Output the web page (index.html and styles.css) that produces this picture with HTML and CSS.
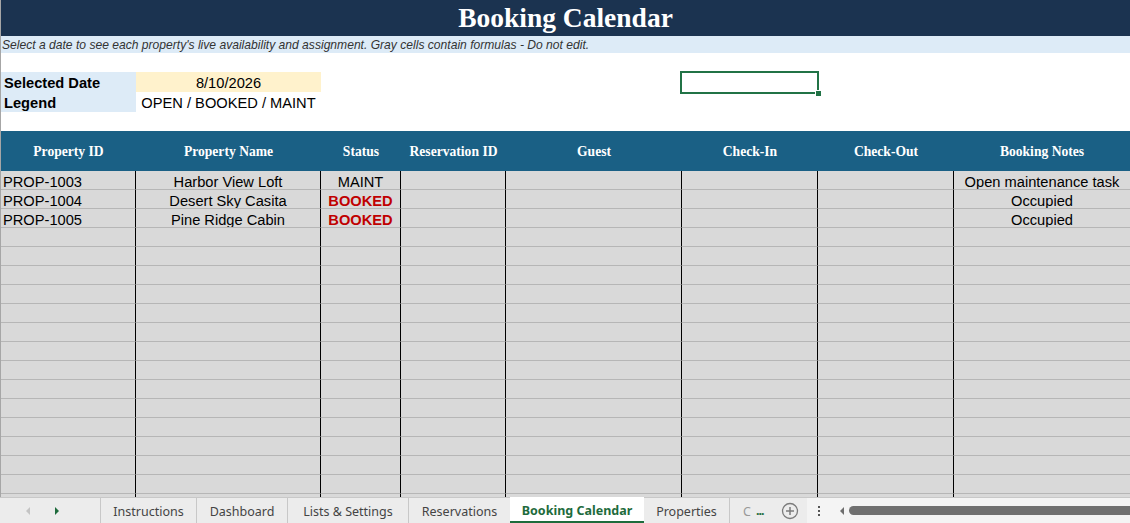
FILE: index.html
```html
<!DOCTYPE html>
<html lang="en">
<head>
  <meta charset="UTF-8" />
  <title>Booking Calendar</title>
  <link rel="stylesheet" href="styles.css">
</head>
<body>
  <div class="sheet">
    <div class="title-bar">Booking Calendar</div>
    <div class="subtitle">Select a date to see each property's live availability and assignment. Gray cells contain formulas - Do not edit.</div>

    <div class="info">
      <div class="info-row">
        <div class="info-label">Selected Date</div>
        <div class="info-value date">8/10/2026</div>
      </div>
      <div class="info-row">
        <div class="info-label">Legend</div>
        <div class="info-value">OPEN / BOOKED / MAINT</div>
      </div>
    </div>

    <!-- active cell cursor -->
    <div class="cell-cursor"><span class="fill-handle"></span></div>

    <div class="head row">
      <div>Property ID</div>
      <div>Property Name</div>
      <div>Status</div>
      <div>Reservation ID</div>
      <div>Guest</div>
      <div>Check-In</div>
      <div>Check-Out</div>
      <div>Booking Notes</div>
    </div>

    <div class="grid">
      <div class="row">
        <div class="left">PROP-1003</div><div>Harbor View Loft</div><div>MAINT</div><div></div><div></div><div></div><div></div><div>Open maintenance task</div>
      </div>
      <div class="row">
        <div class="left">PROP-1004</div><div>Desert Sky Casita</div><div class="booked">BOOKED</div><div></div><div></div><div></div><div></div><div>Occupied</div>
      </div>
      <div class="row">
        <div class="left">PROP-1005</div><div>Pine Ridge Cabin</div><div class="booked">BOOKED</div><div></div><div></div><div></div><div></div><div>Occupied</div>
      </div>
      <div class="row"><div></div><div></div><div></div><div></div><div></div><div></div><div></div><div></div></div>
      <div class="row"><div></div><div></div><div></div><div></div><div></div><div></div><div></div><div></div></div>
      <div class="row"><div></div><div></div><div></div><div></div><div></div><div></div><div></div><div></div></div>
      <div class="row"><div></div><div></div><div></div><div></div><div></div><div></div><div></div><div></div></div>
      <div class="row"><div></div><div></div><div></div><div></div><div></div><div></div><div></div><div></div></div>
      <div class="row"><div></div><div></div><div></div><div></div><div></div><div></div><div></div><div></div></div>
      <div class="row"><div></div><div></div><div></div><div></div><div></div><div></div><div></div><div></div></div>
      <div class="row"><div></div><div></div><div></div><div></div><div></div><div></div><div></div><div></div></div>
      <div class="row"><div></div><div></div><div></div><div></div><div></div><div></div><div></div><div></div></div>
      <div class="row"><div></div><div></div><div></div><div></div><div></div><div></div><div></div><div></div></div>
      <div class="row"><div></div><div></div><div></div><div></div><div></div><div></div><div></div><div></div></div>
      <div class="row"><div></div><div></div><div></div><div></div><div></div><div></div><div></div><div></div></div>
      <div class="row"><div></div><div></div><div></div><div></div><div></div><div></div><div></div><div></div></div>
      <div class="row"><div></div><div></div><div></div><div></div><div></div><div></div><div></div><div></div></div>
      <div class="row cut"><div></div><div></div><div></div><div></div><div></div><div></div><div></div><div></div></div>
    </div>
  </div>

  <div class="tab-bar">
    <div class="nav">
      <svg width="8" height="10" viewBox="0 0 8 10"><path d="M6 1 L2 5 L6 9 Z" fill="#c4c4c4"/></svg>
      <svg width="8" height="10" viewBox="0 0 8 10"><path d="M2 1 L6 5 L2 9 Z" fill="#1e6b3c"/></svg>
    </div>
    <div class="tab" style="width:96px">Instructions</div>
    <div class="tab" style="width:91px">Dashboard</div>
    <div class="tab" style="width:121px">Lists &amp; Settings</div>
    <div class="tab" style="width:102px">Reservations</div>
    <div class="tab active" style="width:134px">Booking Calendar</div>
    <div class="tab" style="width:85px">Properties</div>
    <div class="tab partial">C</div>
    <div class="more">...</div>
    <div class="add">
      <svg width="18" height="18" viewBox="0 0 18 18">
        <circle cx="9" cy="9" r="7.5" fill="none" stroke="#7b7b7b" stroke-width="1.3"/>
        <path d="M9 5 V13 M5 9 H13" stroke="#7b7b7b" stroke-width="1.5"/>
      </svg>
    </div>
    <div class="scroll-area">
      <div class="dots"><span></span><span></span><span></span></div>
      <svg class="arrow" width="6" height="10" viewBox="0 0 6 10"><path d="M5 1 L1 5 L5 9 Z" fill="#6e6e6e"/></svg>
      <div class="thumb"></div>
    </div>
  </div>
</body>
</html>
```

FILE: styles.css
```css
body {
  margin: 0;
  width: 1130px;
  height: 523px;
  overflow: hidden;
  background: #fff;
  font-family: 'Liberation Sans', Arial, sans-serif;
}
.sheet {
  position: relative;
  border-left: 1px solid #a6a6a6;
  width: 1129px;
  height: 497px;
}
.title-bar {
  height: 36px;
  background: #1b3350;
  color: #fff;
  font-family: 'Liberation Serif', 'Times New Roman', serif;
  font-weight: bold;
  font-size: 27.5px;
  line-height: 36px;
  text-align: center;
}
.subtitle {
  height: 15px;
  padding: 2px 0 0 1px;
  background: #ddebf7;
  color: #333;
  font-style: italic;
  font-size: 12.1px;
  line-height: 15px;
  white-space: nowrap;
}
.info {
  padding: 19px 0;
}
.info-row {
  display: flex;
  height: 20px;
  font-size: 14.67px;
  line-height: 22px;
}
.info-label {
  width: 132px;
  padding-left: 3px;
  background: #ddebf7;
  font-weight: bold;
}
.info-value {
  width: 185px;
  text-align: center;
  white-space: nowrap;
}
.info-value.date {
  background: #fff2cc;
}
.cell-cursor {
  position: absolute;
  left: 679px;
  top: 71px;
  width: 135px;
  height: 19px;
  border: 2px solid #217346;
}
.fill-handle {
  position: absolute;
  right: -4px;
  bottom: -4px;
  width: 5px;
  height: 5px;
  background: #217346;
  border: 1px solid #fff;
  border-right: none;
  border-bottom: none;
}
.row {
  display: grid;
  grid-template-columns: 135px 185px 80px 105px 176px 136px 136px 176px;
  height: 19px;
}
.head {
  height: 40px;
  background: #1a6085;
  color: #fff;
  font-family: 'Liberation Serif', 'Times New Roman', serif;
  font-weight: bold;
  font-size: 13.6px;
}
.head > div {
  display: flex;
  align-items: center;
  justify-content: center;
  white-space: nowrap;
  padding-top: 1px;
}
.grid {
  background: #d9d9d9;
}
.grid .row > div {
  box-sizing: border-box;
  border-right: 1px solid #000;
  border-bottom: 1px solid #b6b6b6;
  font-size: 14.67px;
  line-height: 18px;
  padding-top: 2px;
  text-align: center;
  white-space: nowrap;
  overflow: hidden;
  color: #000;
}
.grid .row > div:last-child {
  border-right: none;
}
.grid .row > div.left {
  text-align: left;
  padding-left: 2px;
}
.grid .row > div.booked {
  color: #c00000;
  font-weight: bold;
}
.grid .row.cut {
  height: 3px;
}
.grid .row.cut > div {
  border-bottom: none;
  padding-top: 0;
}
.tab-bar {
  display: flex;
  height: 26px;
  background: #ececec;
  border-top: 1px solid #c8c8c8;
  box-sizing: border-box;
  font-family: 'Noto Sans', 'Open Sans', sans-serif;
  font-size: 12.5px;
  color: #444;
}
.nav {
  width: 100px;
  display: flex;
  align-items: center;
  gap: 21px;
  padding-left: 24px;
  box-sizing: border-box;
}
.tab {
  box-sizing: border-box;
  border-left: 1px solid #c8c8c8;
  display: flex;
  align-items: center;
  justify-content: center;
  white-space: nowrap;
  padding-top: 2px;
}
.tab.active {
  background: #fff;
  color: #1e6b3c;
  font-weight: bold;
  border-left: none;
  border-bottom: 2px solid #1e6b3c;
  margin-top: -1px;
}
.tab.active + .tab {
  border-left: none;
}
.tab.partial {
  width: 27px;
  justify-content: flex-start;
  padding-left: 13px;
  overflow: hidden;
  color: #999;
}
.more {
  width: 18px;
  display: flex;
  align-items: center;
  font-weight: bold;
  color: #1e6b3c;
  letter-spacing: -1px;
}
.add {
  width: 33px;
  display: flex;
  align-items: center;
  padding-left: 7px;
  box-sizing: border-box;
}
.scroll-area {
  flex: 1;
  display: flex;
  align-items: center;
  background: #f4f4f4;
}
.dots {
  display: flex;
  flex-direction: column;
  gap: 2px;
  width: 20px;
  align-items: center;
  margin-left: 2px;
}
.dots span {
  width: 2px;
  height: 2px;
  background: #555;
}
.arrow {
  margin-left: 10px;
}
.thumb {
  flex: 1;
  height: 9px;
  margin-left: 4px;
  background: #707070;
  border-radius: 5px 0 0 5px;
}
```
